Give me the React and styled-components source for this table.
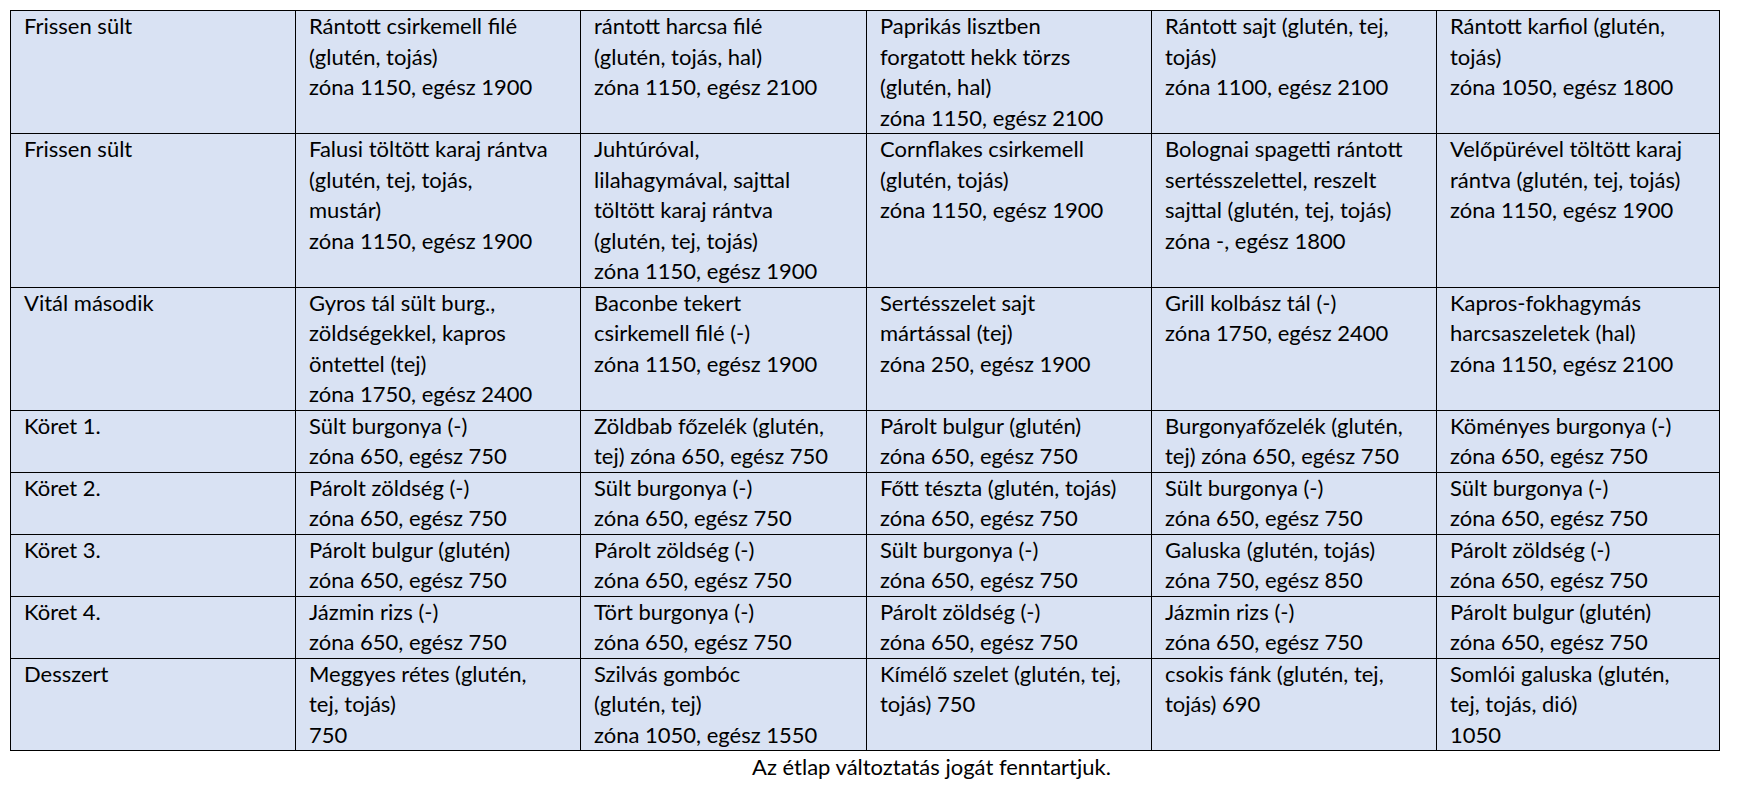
import React from "react";
import styled, { createGlobalStyle } from "styled-components";

const GlobalStyle = createGlobalStyle`
  html, body { margin: 0; padding: 0; background: #ffffff; }
  body { font-family: Lato, "Open Sans", "Liberation Sans", sans-serif; color: #000; }
`;

const Page = styled.div`
  padding: 10px 19px 0 10px;
  width: 1709px;
`;

const Table = styled.table`
  border-collapse: collapse;
  table-layout: fixed;
  width: 1709px;
  background: #d9e2f3;
`;

const Cell = styled.td`
  border: 1px solid #000;
  vertical-align: top;
  padding: 0 6px 0 13px;
  font-size: 22px;
  line-height: 30.5px;
  white-space: nowrap;
  overflow: hidden;
`;

const Line = styled.div`
  display: block;
`;

const Footer = styled.div`
  text-align: center;
  padding-left: 134px;
  font-size: 22px;
  line-height: 30.5px;
  padding-top: 1px;
`;

const widths = [285, 285, 286, 285, 285, 283];

const rows = [
  ["Frissen sült", [
    ["Rántott csirkemell filé", "(glutén, tojás)", "zóna 1150, egész 1900"],
    ["rántott harcsa filé", "(glutén, tojás, hal)", "zóna 1150, egész 2100"],
    ["Paprikás lisztben", "forgatott hekk törzs", "(glutén, hal)", "zóna 1150, egész 2100"],
    ["Rántott sajt (glutén, tej,", "tojás)", "zóna 1100, egész 2100"],
    ["Rántott karfiol (glutén,", "tojás)", "zóna 1050, egész 1800"],
  ]],
  ["Frissen sült", [
    ["Falusi töltött karaj rántva", "(glutén, tej, tojás,", "mustár)", "zóna 1150, egész 1900"],
    ["Juhtúróval,", "lilahagymával, sajttal", "töltött karaj rántva", "(glutén, tej, tojás)", "zóna 1150, egész 1900"],
    ["Cornflakes csirkemell", "(glutén, tojás)", "zóna 1150, egész 1900"],
    ["Bolognai spagetti rántott", "sertésszelettel, reszelt", "sajttal (glutén, tej, tojás)", "zóna -, egész 1800"],
    ["Velőpürével töltött karaj", "rántva (glutén, tej, tojás)", "zóna 1150, egész 1900"],
  ]],
  ["Vitál második", [
    ["Gyros tál sült burg.,", "zöldségekkel, kapros", "öntettel (tej)", "zóna 1750, egész 2400"],
    ["Baconbe tekert", "csirkemell filé (-)", "zóna 1150, egész 1900"],
    ["Sertésszelet sajt", "mártással (tej)", "zóna 250, egész 1900"],
    ["Grill kolbász tál (-)", "zóna 1750, egész 2400"],
    ["Kapros-fokhagymás", "harcsaszeletek (hal)", "zóna 1150, egész 2100"],
  ]],
  ["Köret 1.", [
    ["Sült burgonya (-)", "zóna 650, egész 750"],
    ["Zöldbab főzelék (glutén,", "tej) zóna 650, egész 750"],
    ["Párolt bulgur (glutén)", "zóna 650, egész 750"],
    ["Burgonyafőzelék (glutén,", "tej) zóna 650, egész 750"],
    ["Köményes burgonya (-)", "zóna 650, egész 750"],
  ]],
  ["Köret 2.", [
    ["Párolt zöldség (-)", "zóna 650, egész 750"],
    ["Sült burgonya (-)", "zóna 650, egész 750"],
    ["Főtt tészta (glutén, tojás)", "zóna 650, egész 750"],
    ["Sült burgonya (-)", "zóna 650, egész 750"],
    ["Sült burgonya (-)", "zóna 650, egész 750"],
  ]],
  ["Köret 3.", [
    ["Párolt bulgur (glutén)", "zóna 650, egész 750"],
    ["Párolt zöldség (-)", "zóna 650, egész 750"],
    ["Sült burgonya (-)", "zóna 650, egész 750"],
    ["Galuska (glutén, tojás)", "zóna 750, egész 850"],
    ["Párolt zöldség (-)", "zóna 650, egész 750"],
  ]],
  ["Köret 4.", [
    ["Jázmin rizs (-)", "zóna 650, egész 750"],
    ["Tört burgonya (-)", "zóna 650, egész 750"],
    ["Párolt zöldség (-)", "zóna 650, egész 750"],
    ["Jázmin rizs (-)", "zóna 650, egész 750"],
    ["Párolt bulgur (glutén)", "zóna 650, egész 750"],
  ]],
  ["Desszert", [
    ["Meggyes rétes (glutén,", "tej, tojás)", "750"],
    ["Szilvás gombóc", "(glutén, tej)", "zóna 1050, egész 1550"],
    ["Kímélő szelet (glutén, tej,", "tojás) 750"],
    ["csokis fánk (glutén, tej,", "tojás) 690"],
    ["Somlói galuska (glutén,", "tej, tojás, dió)", "1050"],
  ]],
];

export default function App() {
  return (
    <Page>
      <GlobalStyle />
      <Table>
        <colgroup>
          {widths.map((w, i) => (
            <col key={i} style={{ width: w }} />
          ))}
        </colgroup>
        <tbody>
          {rows.map(([label, cells], r) => (
            <tr key={r}>
              <Cell>
                <Line>{label}</Line>
              </Cell>
              {cells.map((lines, c) => (
                <Cell key={c}>
                  {lines.map((l, i) => (
                    <Line key={i}>{l}</Line>
                  ))}
                </Cell>
              ))}
            </tr>
          ))}
        </tbody>
      </Table>
      <Footer>Az étlap változtatás jogát fenntartjuk.</Footer>
    </Page>
  );
}
